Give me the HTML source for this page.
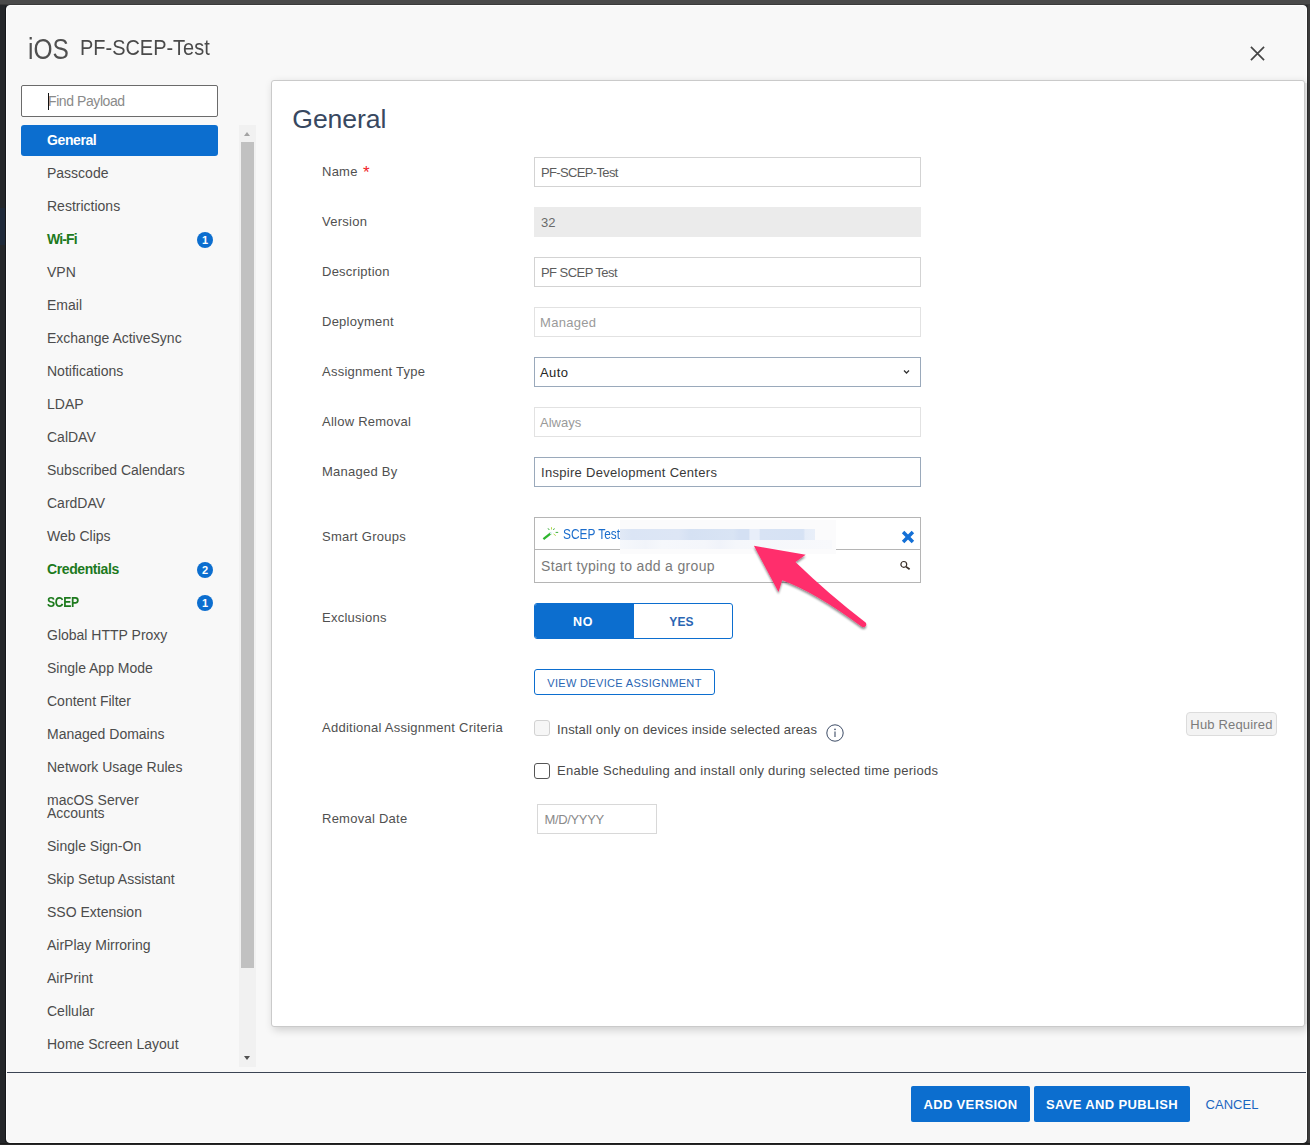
<!DOCTYPE html>
<html>
<head>
<meta charset="utf-8">
<title>PF-SCEP-Test</title>
<style>
*{box-sizing:border-box;margin:0;padding:0}
html,body{width:1310px;height:1145px;overflow:hidden}
body{font-family:"Liberation Sans",sans-serif;background:#25272a;position:relative;color:#454545}
.abs{position:absolute}
#topband{left:0;top:0;width:1310px;height:5px;background:linear-gradient(#4a4a4a 0,#4a4a4a 79%,#3a3a3a 80%)}
#leftedge{left:5px;top:6px;width:1px;height:1136px;background:#15171a}
#rightband{left:1307px;top:5px;width:3px;height:1140px;background:linear-gradient(90deg,#2e2e2e 0,#2e2e2e 33%,#3c3c3c 34%)}
#botband{left:0;top:1143px;width:1310px;height:2px;background:linear-gradient(#1a1a1a 0,#1a1a1a 50%,#282828 51%)}
#navyspot{left:0;top:208px;width:6px;height:37px;background:#1f2a3a}
#modal{left:6px;top:5px;width:1301px;height:1138px;background:#f8f8f8;border:1px solid #fff;border-radius:4px}
/* header */
#ios{left:28px;top:31.5px;font-size:30px;line-height:34px;color:#505050;transform:scaleX(.815);transform-origin:0 0;white-space:nowrap}
#ptitle{left:80px;top:33.7px;font-size:22.8px;line-height:26px;color:#4a4a4a;transform:scaleX(.875);transform-origin:0 0;white-space:nowrap}
#close{left:1250.3px;top:46px;width:15px;height:15px}
/* nav */
#find{left:21px;top:85px;width:197px;height:32px;background:#fff;border:1px solid #6b6b6b;border-radius:2px}
#find span{position:absolute;left:26px;top:7px;font-size:14px;line-height:16px;color:#8a8a8a;letter-spacing:-.42px;white-space:nowrap}
#find i{position:absolute;left:26px;top:7px;width:1px;height:17px;background:#111}
#nav{left:21px;top:125px;width:197px}
.ni{position:relative;padding:10px 30px 10px 26px;font-size:14px;line-height:13px;color:#4c4c4c;height:auto;min-height:33px}
.ni.sel{background:#0c6ecf;color:#fff;font-weight:bold;border-radius:3px;height:31px;min-height:31px;padding-top:9px;padding-bottom:9px;margin-bottom:1px;letter-spacing:-0.4px}
.ni.cfg{color:#1d7a1d;font-weight:bold;letter-spacing:-0.4px}
.bd{position:absolute;left:176px;top:9px;width:16px;height:16px;border-radius:50%;background:#0c6ecf;color:#fff;font-size:11px;line-height:16px;text-align:center;font-weight:bold;letter-spacing:0}
#sbtrack{left:239px;top:125px;width:17px;height:942px;background:#f1f1f1}
#sbthumb{left:241px;top:142px;width:13px;height:826px;background:#c1c1c1}
.arr{width:0;height:0;border-left:3.7px solid transparent;border-right:3.7px solid transparent}
#sbup{left:243.8px;top:132px;border-bottom:4px solid #a3a3a3}
#sbdn{left:243.8px;top:1056px;border-top:4px solid #505050}
/* panel */
#panel{left:271px;top:80px;width:1034px;height:947px;background:#fff;border:1px solid #cacaca;border-radius:3px;box-shadow:2px 3px 9px rgba(0,0,0,.17)}
#pshade{left:1305px;top:83px;width:2px;height:941px;background:linear-gradient(90deg,#d6d6d6,#e6e6e6)}
#h1{left:292.3px;top:102.4px;font-size:26.6px;line-height:34px;color:#384860;letter-spacing:-.1px}
.lb{position:absolute;left:322px;font-size:13px;line-height:16px;color:#505050;letter-spacing:.25px;margin-top:1px;white-space:nowrap}
.in{position:absolute;left:534px;width:387px;height:30px;border:1px solid #d3d3d3;background:#fff;font-size:13px;line-height:28px;padding:1px 0 0 6px;color:#5c5c5c;white-space:nowrap}
.in.ro{border-color:#e2e2e2;color:#9a9a9a;padding-left:5px}
.in.dis{background:#ebebeb;border-color:#ebebeb;color:#6a6a6a}
.in.act{border-color:#9aa9bb;color:#262626}

/* form */
.req{color:#f0222a;margin-left:1.5px;font-size:17px;position:relative;top:2px;line-height:10px;letter-spacing:0}
#sel svg{position:absolute;right:10px;top:11px}
#sg{left:534px;top:517px;width:387px;height:66px;border:1px solid #b5b5b5;background:#fff}
#sgdiv{left:535px;top:549px;width:385px;height:1px;background:#b5b5b5}
#sgname{left:563px;top:526px;font-size:14px;line-height:16px;color:#1b6dcc;transform:scaleX(.85);transform-origin:0 0;white-space:nowrap}
#sgph{left:541px;top:558px;font-size:14px;line-height:17px;color:#7a7a7a;letter-spacing:.33px;white-space:nowrap}
#blur1{left:620px;top:519.5px;width:216px;height:34.5px;background:#fbfbfc}
#blur2{left:620px;top:528.5px;width:194.5px;height:11px;background:linear-gradient(90deg,#e1e9f6 0,#dbe5f5 6%,#dde6f5 30%,#d5e1f3 36%,#d9e4f4 58%,#d4e0f3 61%,#d4e0f3 66%,#e8eef9 66.7%,#e8eef9 71.3%,#d8e3f4 72%,#d6e2f4 94%,#e6edf8 95%,#e9eff9 100%)}
#blur3{left:620px;top:539.5px;width:212px;height:9.5px;background:linear-gradient(90deg,#f6f8fc 0,#f1f4fa 12%,#f6f8fc 20%,#f4f6fb 40%,#f0f3fa 47%,#f5f7fb 55%,#f8f9fc 100%)}
#tog{left:534px;top:603px;width:199px;height:36px;border:1px solid #0c6ecf;border-radius:3px;background:#fff;overflow:hidden}
#tog .no{position:absolute;left:0;top:0;width:99px;height:34px;background:#0c6ecf;color:#fff;font-weight:bold;font-size:12.5px;line-height:34px;padding:.5px 3px 0 0;text-align:center;letter-spacing:.6px}
#tog .yes{position:absolute;left:99px;top:0;width:98px;height:34px;color:#2a66b3;font-weight:bold;font-size:12px;line-height:34px;padding:.5px 3px 0 0;text-align:center;letter-spacing:.2px}
#vda{left:534px;top:669px;width:181px;height:26px;border:1px solid #0c6ecf;border-radius:3px;background:#fff;color:#2a66b3;font-size:11px;line-height:24px;padding-top:1px;text-align:center;letter-spacing:.32px;white-space:nowrap}
.cb{position:absolute;left:534px;width:16px;height:16px;border-radius:3px;background:#fff}
.cbt{position:absolute;left:557px;font-size:13px;line-height:16px;color:#4a4a4a;white-space:nowrap}
#info{left:826px;top:724px;width:18px;height:18px}
#hub{left:1186px;top:712px;width:91px;height:24px;border:1px solid #dcdcdc;border-radius:4px;background:#f3f3f3;color:#7b7b7b;font-size:13px;line-height:22px;padding-top:.6px;text-align:center;letter-spacing:.17px;white-space:nowrap}
#rd{left:537px;top:804px;width:120px;height:30px;border:1px solid #d8d8d8;background:#fff;color:#8a8a8a;font-size:13px;line-height:28px;padding:1px 0 0 6.5px;letter-spacing:-.35px}
#arrow{left:730px;top:520px;width:160px;height:130px;overflow:visible}
/* footer */
#fline{left:7px;top:1072px;width:1299px;height:1px;background:#3b4454}
.btn{position:absolute;top:1086px;height:36px;background:#0c6ecf;color:#fff;font-weight:bold;font-size:13px;line-height:36px;padding-top:1.3px;text-align:center;border-radius:2px;letter-spacing:.35px;white-space:nowrap}
#cancel{left:1205.5px;top:1087.3px;font-size:13px;line-height:36px;color:#1b66c0;letter-spacing:.05px}
</style>
</head>
<body>
<div id="topband" class="abs"></div>
<div id="navyspot" class="abs"></div>
<div id="rightband" class="abs"></div>
<div id="botband" class="abs"></div>
<div id="leftedge" class="abs"></div>
<div id="modal" class="abs"></div>

<div id="ios" class="abs">iOS</div>
<div id="ptitle" class="abs">PF-SCEP-Test</div>
<svg id="close" class="abs" viewBox="0 0 16 16"><path d="M1 1L15 15M15 1L1 15" stroke="#454545" stroke-width="1.8" fill="none"/></svg>

<div id="find" class="abs"><span>Find Payload</span><i></i></div>
<div id="nav" class="abs">
<div class="ni sel">General</div>
<div class="ni">Passcode</div>
<div class="ni">Restrictions</div>
<div class="ni cfg" style="letter-spacing:-.85px">Wi-Fi<b class="bd">1</b></div>
<div class="ni">VPN</div>
<div class="ni">Email</div>
<div class="ni">Exchange ActiveSync</div>
<div class="ni">Notifications</div>
<div class="ni">LDAP</div>
<div class="ni">CalDAV</div>
<div class="ni">Subscribed Calendars</div>
<div class="ni">CardDAV</div>
<div class="ni">Web Clips</div>
<div class="ni cfg">Credentials<b class="bd">2</b></div>
<div class="ni cfg"><span style="display:inline-block;transform:scaleX(.87);transform-origin:0 50%">SCEP</span><b class="bd">1</b></div>
<div class="ni">Global HTTP Proxy</div>
<div class="ni">Single App Mode</div>
<div class="ni">Content Filter</div>
<div class="ni">Managed Domains</div>
<div class="ni">Network Usage Rules</div>
<div class="ni">macOS Server<br>Accounts</div>
<div class="ni">Single Sign-On</div>
<div class="ni">Skip Setup Assistant</div>
<div class="ni">SSO Extension</div>
<div class="ni">AirPlay Mirroring</div>
<div class="ni">AirPrint</div>
<div class="ni">Cellular</div>
<div class="ni">Home Screen Layout</div>
</div>
<div id="sbtrack" class="abs"></div>
<div id="sbthumb" class="abs"></div>
<div id="sbup" class="abs arr"></div>
<div id="sbdn" class="abs arr"></div>

<div id="panel" class="abs"></div>
<div id="pshade" class="abs"></div>
<div id="h1" class="abs">General</div>


<div class="lb" style="top:163px">Name <span class="req">*</span></div>
<div class="in" style="top:157px;letter-spacing:-.65px">PF-SCEP-Test</div>
<div class="lb" style="top:213px">Version</div>
<div class="in dis" style="top:207px">32</div>
<div class="lb" style="top:263px">Description</div>
<div class="in" style="top:257px;letter-spacing:-.55px">PF SCEP Test</div>
<div class="lb" style="top:313px">Deployment</div>
<div class="in ro" style="top:307px;letter-spacing:.3px">Managed</div>
<div class="lb" style="top:363px">Assignment Type</div>
<div class="in act" id="sel" style="top:357px;padding-left:5px;letter-spacing:.4px">Auto<svg width="7" height="6" viewBox="0 0 7 6"><path d="M1 1.5L3.5 4L6 1.5" stroke="#333" stroke-width="1.3" fill="none"/></svg></div>
<div class="lb" style="top:413px">Allow Removal</div>
<div class="in ro" style="top:407px">Always</div>
<div class="lb" style="top:463px">Managed By</div>
<div class="in act" style="top:457px;letter-spacing:.29px;color:#383838">Inspire Development Centers</div>

<div class="lb" style="top:528px">Smart Groups</div>
<div id="sg" class="abs"></div>
<div id="sgdiv" class="abs"></div>
<svg class="abs" id="wand" style="left:541px;top:525px" width="19" height="16" viewBox="541 525 19 16"><path d="M543.4 539.2L551 533.2" stroke="#2db52d" stroke-width="2.3" fill="none"/><path d="M550.2 533.8L552.2 532.2" stroke="#e8f4ff" stroke-width="1.6"/><path d="M548 528.3l1.3 1.7M554.4 528.4l-1 1.6M555.6 532.4h2.6" stroke="#3cae3c" stroke-width="1" fill="none"/><path d="M551.5 527.2v2.3M553.6 534l2.2 1.6" stroke="#b5d84a" stroke-width="1" fill="none"/></svg>
<div id="sgname" class="abs">SCEP Test</div>
<div id="blur1" class="abs"></div>
<div id="blur2" class="abs"></div>
<div id="blur3" class="abs"></div>
<svg class="abs" style="left:901px;top:529.6px" width="14" height="14" viewBox="0 0 14 14"><path d="M2.1 2.1L11.9 11.9M11.9 2.1L2.1 11.9" stroke="#1470d6" stroke-width="3.5" fill="none"/></svg>
<div id="sgph" class="abs">Start typing to add a group</div>
<svg class="abs" style="left:899px;top:560px" width="12" height="12" viewBox="0 0 12 12"><circle cx="4.8" cy="4.4" r="2.9" stroke="#3a2f28" stroke-width="1.2" fill="none"/><path d="M6.9 6.6L10.6 9.3" stroke="#3a2f28" stroke-width="1.7"/></svg>

<div class="lb" style="top:609px">Exclusions</div>
<div id="tog" class="abs"><div class="no">NO</div><div class="yes">YES</div></div>
<div id="vda" class="abs">VIEW DEVICE ASSIGNMENT</div>

<div class="lb" style="top:719px">Additional Assignment Criteria</div>
<div class="cb" style="top:720px;border:1px solid #d2d2d2;background:#f6f6f6"></div>
<div class="cbt" style="top:721.7px;letter-spacing:.16px">Install only on devices inside selected areas</div>
<svg id="info" class="abs" viewBox="0 0 18 18"><circle cx="9" cy="9" r="8.2" stroke="#3d4c66" stroke-width="1" fill="#fff"/><path d="M9 7.6V13" stroke="#3d4c66" stroke-width="1.1"/><circle cx="9" cy="5.4" r=".8" fill="#3d4c66"/></svg>
<div id="hub" class="abs">Hub Required</div>
<div class="cb" style="top:763px;border:1.4px solid #555"></div>
<div class="cbt" style="top:763px;letter-spacing:.27px">Enable Scheduling and install only during selected time periods</div>

<div class="lb" style="top:810px">Removal Date</div>
<div id="rd" class="abs">M/D/YYYY</div>

<svg id="arrow" class="abs" viewBox="730 520 160 130"><defs><filter id="ds" x="-20%" y="-20%" width="140%" height="140%"><feGaussianBlur in="SourceAlpha" stdDeviation="1.2"/><feOffset dx="-0.5" dy="1.5"/><feComponentTransfer><feFuncA type="linear" slope=".45"/></feComponentTransfer><feMerge><feMergeNode/><feMergeNode in="SourceGraphic"/></feMerge></filter></defs>
<path filter="url(#ds)" d="M753.9 545.8L805.7 554.8L795.4 562.1Q829.2 594.8 865.6 622.6Q867.3 625 865 626.8Q863.3 627.6 861.5 626.5Q814 591.5 782.2 580.2L778.5 592Z" fill="#ff2d6c"/></svg>

<div id="fline" class="abs"></div>
<div class="btn" style="left:911px;width:119px">ADD VERSION</div>
<div class="btn" style="left:1034px;width:156px">SAVE AND PUBLISH</div>
<div id="cancel" class="abs">CANCEL</div>
</body>
</html>
